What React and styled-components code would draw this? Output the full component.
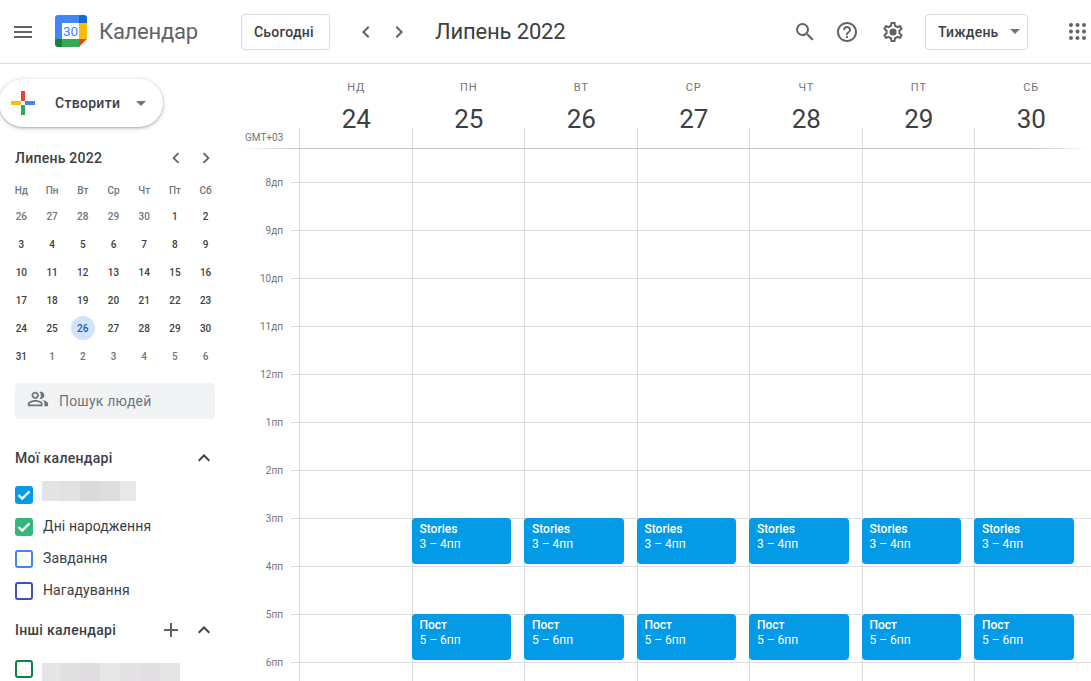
import React from 'react'
import styled, { createGlobalStyle } from 'styled-components'
import {
    MdMenu, MdSearch, MdHelpOutline, MdChevronLeft, MdChevronRight,
    MdExpandLess, MdAdd, MdOutlinePeopleAlt
} from 'react-icons/md'

const GlobalStyle = createGlobalStyle`
    html, body {
        margin: 0;
        height: 100%;
        overflow: hidden;
        background: #fff;
        font-family: Roboto, "Noto Sans", sans-serif;
        color: #3c4043;
    }
`

const weekDays = [
    ['НД', 24], ['ПН', 25], ['ВТ', 26], ['СР', 27], ['ЧТ', 28], ['ПТ', 29], ['СБ', 30]
]
const miniHead = ['Нд', 'Пн', 'Вт', 'Ср', 'Чт', 'Пт', 'Сб']
const miniDays = [
    26, 27, 28, 29, 30, 1, 2, 3, 4, 5, 6, 7, 8, 9, 10, 11, 12, 13, 14, 15, 16, 17, 18, 19, 20, 21, 22, 23,
    24, 25, 26, 27, 28, 29, 30, 31, 1, 2, 3, 4, 5, 6
]
const hours = ['8дп', '9дп', '10дп', '11дп', '12пп', '1пп', '2пп', '3пп', '4пп', '5пп', '6пп']
const events = {
    '3пп': { title: 'Stories', time: '3 – 4пп' },
    '5пп': { title: 'Пост', time: '5 – 6пп' }
}

function Logo() {
    return (
        <svg width="32" height="32" viewBox="0 0 32 32">
            <path d="M7 0h17v8H7z" fill="#4285f4" />
            <path d="M24 0h5a3 3 0 0 1 3 3v5h-8z" fill="#1967d2" />
            <path d="M24 8h8v16h-8z" fill="#fbbc04" />
            <path d="M7 24h17v8H7z" fill="#34a853" />
            <path d="M0 24h7v8H3a3 3 0 0 1-3-3z" fill="#188038" />
            <path d="M0 8h7v16H0z" fill="#4285f4" />
            <path d="M0 3a3 3 0 0 1 3-3h4v8H0z" fill="#4285f4" />
            <path d="M24 24h8l-8 8z" fill="#ea4335" />
            <path d="M7 8h17v16H7z" fill="#fff" />
            <text x="15.5" y="21" textAnchor="middle" fontSize="13.5" fill="#4285f4" fontFamily="Roboto, sans-serif">30</text>
        </svg>
    )
}

function ColorPlus() {
    return (
        <svg width="24" height="24" viewBox="0 0 24 24">
            <path d="M10 10V0h4v10z" fill="#ea4335" />
            <path d="M14 10h10v4H14z" fill="#4285f4" />
            <path d="M10 14h4v10h-4z" fill="#34a853" />
            <path d="M0 10h10v4H0z" fill="#fbbc04" />
        </svg>
    )
}

function AppsDots() {
    const dots = []
    for (let y = 0; y < 3; y++) {
        for (let x = 0; x < 3; x++) {
            dots.push(<circle key={`${x}${y}`} cx={2 + x * 6.5} cy={2 + y * 6.5} r="2" fill="#5f6368" />)
        }
    }
    return <svg width="18" height="18" viewBox="0 0 18 18">{dots}</svg>
}

// outlined gear with a solid hub, the package only has the ringed one
function Gear() {
    return (
        <svg width="24" height="24" viewBox="0 0 24 24" fill="currentColor">
            <path d="M19.43 12.98c.04-.32.07-.64.07-.98 0-.34-.03-.66-.07-.98l2.11-1.65c.19-.15.24-.42.12-.64l-2-3.46c-.09-.16-.26-.25-.44-.25-.06 0-.12.01-.17.03l-2.49 1c-.52-.4-1.08-.73-1.69-.98l-.38-2.65C14.46 2.18 14.25 2 14 2h-4c-.25 0-.46.18-.49.42l-.38 2.65c-.61.25-1.17.59-1.69.98l-2.49-1c-.06-.02-.12-.03-.18-.03-.17 0-.34.09-.43.25l-2 3.46c-.13.22-.07.49.12.64l2.11 1.65c-.04.32-.07.65-.07.98 0 .33.03.66.07.98l-2.11 1.65c-.19.15-.24.42-.12.64l2 3.46c.09.16.26.25.44.25.06 0 .12-.01.17-.03l2.49-1c.52.4 1.08.73 1.69.98l.38 2.65c.03.24.24.42.49.42h4c.25 0 .46-.18.49-.42l.38-2.65c.61-.25 1.17-.59 1.69-.98l2.49 1c.06.02.12.03.18.03.17 0 .34-.09.43-.25l2-3.46c.12-.22.07-.49-.12-.64l-2.11-1.65zm-1.98-1.71c.04.31.05.52.05.73 0 .21-.02.43-.05.73l-.14 1.13.89.7 1.08.84-.7 1.21-1.27-.51-1.04-.42-.9.68c-.43.32-.84.56-1.25.73l-1.06.43-.16 1.13-.2 1.35h-1.4l-.19-1.35-.16-1.13-1.06-.43c-.43-.18-.83-.41-1.23-.71l-.91-.7-1.06.43-1.27.51-.7-1.21 1.08-.84.89-.7-.14-1.13c-.03-.31-.05-.54-.05-.74s.02-.43.05-.73l.14-1.13-.89-.7-1.08-.84.7-1.21 1.27.51 1.04.42.9-.68c.43-.32.84-.56 1.25-.73l1.06-.43.16-1.13.2-1.35h1.39l.19 1.35.16 1.13 1.06.43c.43.18.83.41 1.23.71l.91.7 1.06-.43 1.27-.51.7 1.21-1.07.85-.89.7.14 1.13z" />
            <circle cx="12" cy="12" r="3.6" />
        </svg>
    )
}

function CalendarItem({ color, checked, children }) {
    return (
        <CalRow>
            <Checkbox $color={color} $checked={checked}>
                {checked && (
                    <svg width="14" height="14" viewBox="0 0 14 14">
                        <path d="M1.5 7l3.7 3.6 7.3-7.2" fill="none" stroke="#fff" strokeWidth="2.2" />
                    </svg>
                )}
            </Checkbox>
            {children}
        </CalRow>
    )
}

export default function App() {
    return (
        <>
            <GlobalStyle />
            <Page>
                <Header>
                    <MenuSlot><MdMenu size={24} /></MenuSlot>
                    <LogoSlot><Logo /></LogoSlot>
                    <Brand>Календар</Brand>
                    <OutlineButton $width={89}>Сьогодні</OutlineButton>
                    <NavArrows>
                        <MdChevronLeft size={24} />
                        <MdChevronRight size={24} />
                    </NavArrows>
                    <MonthTitle>Липень 2022</MonthTitle>
                    <HeaderTools>
                        <MdSearch size={24} />
                        <MdHelpOutline size={24} />
                        <Gear />
                    </HeaderTools>
                    <OutlineButton $width={103}>
                        Тиждень
                        <Caret />
                    </OutlineButton>
                    <AppsSlot><AppsDots /></AppsSlot>
                </Header>
                <Body>
                    <Sidebar>
                        <CreateButton>
                            <ColorPlus />
                            <CreateLabel>Створити</CreateLabel>
                            <Caret />
                        </CreateButton>
                        <MiniHeader>
                            <MiniTitle>Липень 2022</MiniTitle>
                            <MiniArrows>
                                <MdChevronLeft size={22} />
                                <MdChevronRight size={22} />
                            </MiniArrows>
                        </MiniHeader>
                        <MiniGrid>
                            {miniHead.map(d => <MiniHead key={d}>{d}</MiniHead>)}
                            {miniDays.map((d, i) => (
                                <MiniDay key={i} $muted={i < 5 || i > 35} $today={i === 30}>
                                    <span>{d}</span>
                                </MiniDay>
                            ))}
                        </MiniGrid>
                        <PeopleSearch>
                            <MdOutlinePeopleAlt size={22} />
                            Пошук людей
                        </PeopleSearch>
                        <SectionHead $top={26}>
                            Мої календарі
                            <MdExpandLess size={24} />
                        </SectionHead>
                        <CalendarList $top={8}>
                            <CalendarItem color="#039be5" checked>
                                <Blur $lift={-4} $height={20}>
                                    {['#e4e4e4', '#e1e1e1', '#dadada', '#dddddd', '#e9e9e9'].map((c, i) => (
                                        <BlurTile key={i} $color={c} $width={i === 0 ? 18 : i === 4 ? 16 : 20} />
                                    ))}
                                </Blur>
                            </CalendarItem>
                            <CalendarItem color="#33b679" checked><CalName>Дні народження</CalName></CalendarItem>
                            <CalendarItem color="#4285f4"><CalName>Завдання</CalName></CalendarItem>
                            <CalendarItem color="#3f51b5"><CalName>Нагадування</CalName></CalendarItem>
                        </CalendarList>
                        <SectionHead $top={10}>
                            Інші календарі
                            <SectionIcons>
                                <MdAdd size={24} />
                                <MdExpandLess size={24} />
                            </SectionIcons>
                        </SectionHead>
                        <CalendarList $top={10}>
                            <CalendarItem color="#0b8043">
                                <Blur $lift={3} $height={18}>
                                    {['#e6e4e6', '#e1e0e1', '#dedcde', '#e8e7e8', '#e3e1e3', '#e1dfe1', '#e6e5e6'].map((c, i) => (
                                        <BlurTile key={i} $color={c} $width={i === 0 ? 18 : 20} />
                                    ))}
                                </Blur>
                            </CalendarItem>
                        </CalendarList>
                    </Sidebar>
                    <Main>
                        <DayHead>
                            <span />
                            {weekDays.map(([name, num]) => (
                                <DayTitle key={name}>
                                    <DayName>{name}</DayName>
                                    <DayNumber>{num}</DayNumber>
                                </DayTitle>
                            ))}
                        </DayHead>
                        <AllDayRow>
                            <ZoneLabel>GMT+03</ZoneLabel>
                            {weekDays.map(([name]) => <AllDayCell key={name} />)}
                        </AllDayRow>
                        <HourRow $height={33}>
                            <Gutter />
                            {weekDays.map(([name]) => <Cell key={name} $noTop />)}
                        </HourRow>
                        {hours.map(h => (
                            <HourRow key={h}>
                                <Gutter $tick><HourLabel>{h}</HourLabel></Gutter>
                                {weekDays.map(([name], i) => (
                                    <Cell key={name}>
                                        {events[h] && i > 0 && (
                                            <EventCard>
                                                <EventTitle>{events[h].title}</EventTitle>
                                                <div>{events[h].time}</div>
                                            </EventCard>
                                        )}
                                    </Cell>
                                ))}
                            </HourRow>
                        ))}
                    </Main>
                </Body>
            </Page>
        </>
    )
}

const Page = styled.div`
    height: 681px;
    overflow: hidden;
    display: flex;
    flex-direction: column;
`

const Header = styled.header`
    height: 63px;
    flex: none;
    display: flex;
    align-items: center;
    border-bottom: 1px solid #dadce0;
`

const MenuSlot = styled.div`
    width: 24px;
    margin-left: 11px;
    display: flex;
    color: #5f6368;
`

const LogoSlot = styled.div`
    margin: -1px 0 0 20px;
    display: flex;
`

const Brand = styled.div`
    margin-left: 12px;
    width: 142px;
    font-size: 22px;
    letter-spacing: -0.25px;
    color: #5f6368;
    line-height: 28px;
`

const OutlineButton = styled.div`
    width: ${p => p.$width}px;
    height: 36px;
    box-sizing: border-box;
    border: 1px solid #dadce0;
    border-radius: 4px;
    display: flex;
    align-items: center;
    padding-left: 12px;
    font-size: 14px;
    font-weight: 500;
    letter-spacing: 0.2px;
    color: #3c4043;
    white-space: nowrap;
    div {
        margin-left: 11px;
    }
`

const NavArrows = styled.div`
    margin-left: 24px;
    width: 81px;
    display: flex;
    gap: 9px;
    color: #5f6368;
`

const MonthTitle = styled.div`
    width: 358px;
    font-size: 22px;
    letter-spacing: -0.15px;
    line-height: 28px;
    color: #3c4043;
`

const HeaderTools = styled.div`
    width: 132px;
    display: flex;
    align-items: center;
    gap: 22px;
    color: #5f6368;
    svg:first-child {
        margin-right: -4px;
    }
`

const AppsSlot = styled.div`
    margin-left: 41px;
    display: flex;
`

const Caret = styled.div`
    width: 0;
    height: 0;
    border-left: 5px solid transparent;
    border-right: 5px solid transparent;
    border-top: 5px solid #70757a;
    flex: none;
`

const Body = styled.div`
    flex: 1;
    display: flex;
    min-height: 0;
`

const Sidebar = styled.aside`
    width: 240px;
    flex: none;
    box-sizing: border-box;
    padding: 15px 25px 0 15px;
`

const CreateButton = styled.div`
    width: 164px;
    height: 48px;
    margin-left: -16px;
    box-sizing: border-box;
    padding-left: 12px;
    border-radius: 24px;
    display: flex;
    align-items: center;
    background: #fff;
    box-shadow: 0 1px 2px 0 rgba(60, 64, 67, 0.3), 0 1px 4px 1px rgba(60, 64, 67, 0.18);
`

const CreateLabel = styled.span`
    margin: -1px 16px 0 20px;
    font-size: 14px;
    font-weight: 500;
    letter-spacing: 0.3px;
    color: #3c4043;
`

const MiniHeader = styled.div`
    margin-top: 20px;
    height: 22px;
    display: flex;
    align-items: center;
    justify-content: space-between;
`

const MiniTitle = styled.div`
    font-size: 14px;
    font-weight: 500;
    color: #3c4043;
    letter-spacing: 0.25px;
`

const MiniArrows = styled.div`
    display: flex;
    gap: 8px;
    margin-right: -2px;
    color: #5f6368;
`

const MiniGrid = styled.div`
    margin: 9px 0 0 -9px;
    width: 215px;
    display: grid;
    grid-template-columns: repeat(7, 1fr);
    grid-auto-rows: 28px;
    grid-template-rows: 24px;
`

const MiniHead = styled.div`
    display: flex;
    align-items: center;
    justify-content: center;
    font-size: 10px;
    font-weight: 500;
    color: #70757a;
`

const MiniDay = styled.div`
    display: flex;
    align-items: center;
    justify-content: center;
    font-size: 10px;
    font-weight: 500;
    color: ${p => (p.$today ? '#185abc' : p.$muted ? '#70757a' : '#3c4043')};
    span {
        width: 24px;
        height: 24px;
        border-radius: 50%;
        display: flex;
        align-items: center;
        justify-content: center;
        background: ${p => (p.$today ? '#d2e3fc' : 'transparent')};
    }
`

const PeopleSearch = styled.div`
    margin-top: 13px;
    width: 200px;
    height: 36px;
    box-sizing: border-box;
    padding-left: 12px;
    display: flex;
    align-items: center;
    gap: 10px;
    background: #f1f3f4;
    border-radius: 4px;
    font-size: 14px;
    color: #70757a;
    letter-spacing: 0.2px;
    svg {
        margin-top: -4px;
    }
`

const SectionHead = styled.div`
    margin-top: ${p => p.$top}px;
    width: 201px;
    height: 26px;
    display: flex;
    align-items: center;
    justify-content: space-between;
    font-size: 14px;
    font-weight: 500;
    letter-spacing: 0.3px;
    color: #3c4043;
    svg {
        color: #3c4043;
        flex: none;
    }
`

const SectionIcons = styled.div`
    display: flex;
    gap: 9px;
    svg:first-child {
        color: #5f6368;
    }
`

const CalendarList = styled.div`
    margin-top: ${p => p.$top}px;
    display: flex;
    flex-direction: column;
`

const CalRow = styled.div`
    height: 32px;
    display: flex;
    align-items: center;
    gap: 10px;
    font-size: 14px;
    color: #3c4043;
    letter-spacing: 0.1px;
    white-space: nowrap;
`

const CalName = styled.span`
    margin-top: -2px;
`

const Checkbox = styled.div`
    width: 18px;
    height: 18px;
    box-sizing: border-box;
    flex: none;
    border-radius: 3px;
    border: 2px solid ${p => p.$color};
    background: ${p => (p.$checked ? p.$color : 'transparent')};
    display: flex;
    align-items: center;
    justify-content: center;
`

const Blur = styled.div`
    display: flex;
    height: ${p => p.$height}px;
    margin-left: -1px;
    transform: translateY(${p => p.$lift}px);
`

const BlurTile = styled.div`
    width: ${p => p.$width}px;
    background: ${p => p.$color};
`

const Main = styled.main`
    flex: 1;
    min-width: 0;
    display: flex;
    flex-direction: column;
`

const DayHead = styled.div`
    height: 64px;
    flex: none;
    display: grid;
    grid-template-columns: 60px repeat(7, 112.5px);
`

const DayTitle = styled.div`
    display: flex;
    flex-direction: column;
    align-items: center;
`

const DayName = styled.div`
    margin-top: 16px;
    font-size: 11px;
    line-height: 16px;
    font-weight: 400;
    letter-spacing: 0.9px;
    color: #70757a;
`

const DayNumber = styled.div`
    margin-top: 7px;
    font-size: 26px;
    line-height: 32px;
    color: #3c4043;
`

const AllDayRow = styled.div`
    height: 20px;
    flex: none;
    display: grid;
    grid-template-columns: 59px repeat(6, 112.5px) 1fr;
    border-bottom: 1px solid;
    border-image: linear-gradient(90deg, transparent 0, #c4c6c8 7%, #c4c6c8 93%, transparent 100%) 1;
`

const ZoneLabel = styled.div`
    font-size: 10px;
    line-height: 20px;
    color: #70757a;
    margin-left: 5px;
`

const AllDayCell = styled.div`
    border-left: 1px solid #dadce0;
`

const HourRow = styled.div`
    height: ${p => p.$height || 48}px;
    flex: none;
    box-sizing: border-box;
    display: grid;
    grid-template-columns: 59px repeat(6, 112.5px) 1fr;
`

const Gutter = styled.div`
    position: relative;
    text-align: right;
    padding-right: 16px;
    &::after {
        content: ${p => (p.$tick ? '""' : 'none')};
        position: absolute;
        right: 0;
        top: 0;
        width: 8px;
        height: 1px;
        background: #dadce0;
    }
`

const HourLabel = styled.div`
    font-size: 10px;
    line-height: 14px;
    margin-top: -6px;
    color: #70757a;
`

const Cell = styled.div`
    box-sizing: border-box;
    border-left: 1px solid #dadce0;
    border-top: ${p => (p.$noTop ? 'none' : '1px solid #dadce0')};
    min-width: 0;
`

const EventCard = styled.div`
    width: 99.5px;
    height: 46px;
    margin: -1px 0 0 -1px;
    box-sizing: border-box;
    padding: 4px 8px 0;
    position: relative;
    border-radius: 4px;
    background: #039be5;
    color: #fff;
    font-size: 12px;
    line-height: 15px;
`

const EventTitle = styled.div`
    font-weight: 500;
`
